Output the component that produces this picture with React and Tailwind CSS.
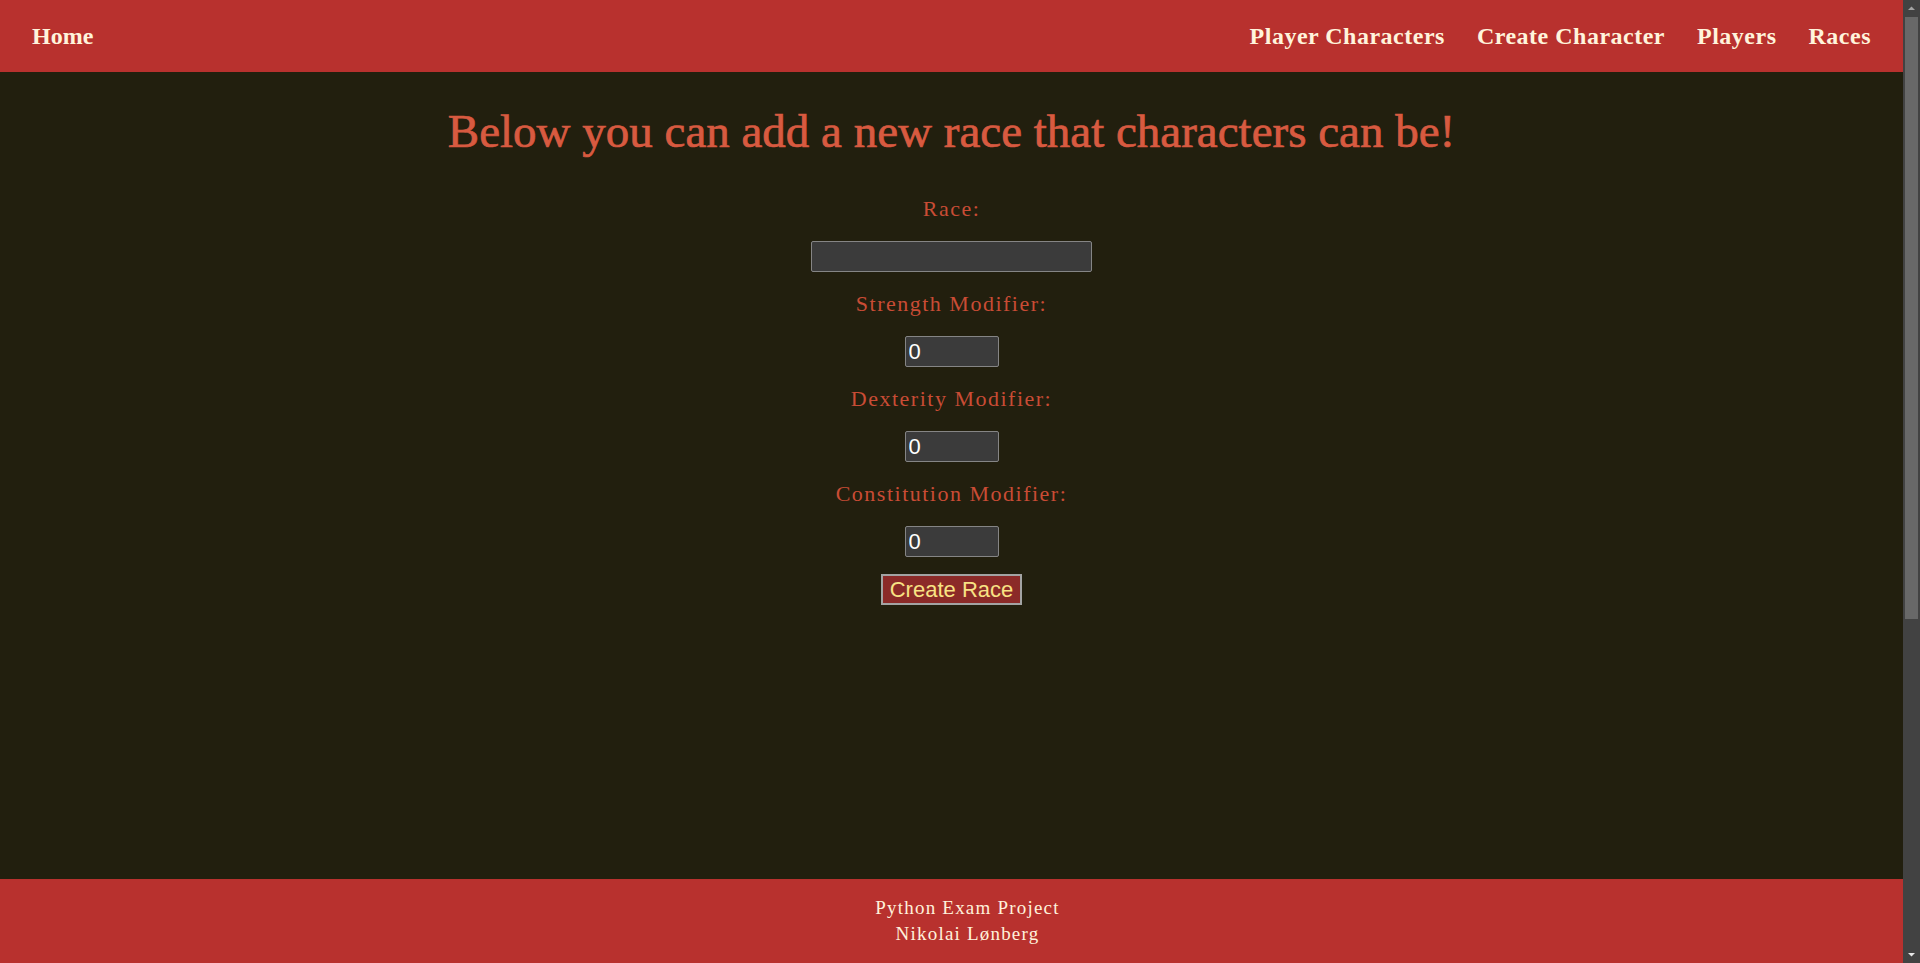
import { useState } from "react";

const navLinks = ["Player Characters", "Create Character", "Players", "Races"];

const modifiers = [
    { id: "strength", label: "Strength Modifier:" },
    { id: "dexterity", label: "Dexterity Modifier:" },
    { id: "constitution", label: "Constitution Modifier:" },
];

const serif = "font-['Liberation_Serif',Times,serif]";

// dark window scrollbar, as the browser draws it in the reference
const Scrollbar = () => (
    <div className="flex w-[17px] shrink-0 flex-col bg-[#424242]">
        <svg width="17" height="17" viewBox="0 0 17 17">
            <path d="M5 10 L8.5 6.5 L12 10 Z" fill="#a3a3a3" />
        </svg>
        <div className="mx-[2px] h-[602px] bg-[#686868]" />
        <div className="flex-1" />
        <svg width="17" height="17" viewBox="0 0 17 17">
            <path d="M5 7 L8.5 10.5 L12 7 Z" fill="#e6e6e6" />
        </svg>
    </div>
);

const App = () => {
    const [race, setRace] = useState("");
    const [mods, setMods] = useState({ strength: 0, dexterity: 0, constitution: 0 });

    return (
        <div className={`flex h-screen bg-[#221f0e] ${serif}`}>
            <div className="flex-1 overflow-y-auto [color-scheme:dark] [scrollbar-width:none]">
                <div className="flex min-h-[1486px] flex-col">
                    <nav className="flex items-center justify-between bg-[#b8312e] px-[32px] py-5 text-[24px] leading-8 font-bold text-[#fff4dc]">
                        <a href="#">Home</a>
                        <div className="flex gap-[32px]">
                            {navLinks.map((l) => (
                                <a key={l} href="#" className="tracking-[0.5px]">
                                    {l}
                                </a>
                            ))}
                        </div>
                    </nav>

                    <main className="flex flex-1 flex-col items-center">
                        <h1 className="mt-[31px] mb-[35px] text-[47px] leading-[56px] text-[#d85a40] [-webkit-text-stroke:0.7px_#d85a40]">
                            Below you can add a new race that characters can be!
                        </h1>

                        <form className="flex flex-col items-center gap-[17px]" onSubmit={(e) => e.preventDefault()}>
                            <label htmlFor="race" className="text-[22px] leading-[30px] tracking-[1.5px] text-[#c94c35]">
                                Race:
                            </label>
                            <input
                                id="race"
                                type="text"
                                value={race}
                                onChange={(e) => setRace(e.target.value)}
                                className="h-[31px] w-[281px] rounded-[2px] border border-[#858585] bg-[#3b3b3b] px-[3px] font-['Liberation_Sans',Arial,sans-serif] text-[22px] text-white outline-none"
                            />
                            {modifiers.map((m) => (
                                <div key={m.id} className="contents">
                                    <label htmlFor={m.id} className="text-[22px] leading-[30px] tracking-[1.5px] text-[#c94c35]">
                                        {m.label}
                                    </label>
                                    <input
                                        id={m.id}
                                        type="number"
                                        value={mods[m.id]}
                                        onChange={(e) => setMods({ ...mods, [m.id]: e.target.value })}
                                        className="h-[31px] w-[94px] rounded-[2px] border border-[#858585] bg-[#3b3b3b] px-[3px] font-['Liberation_Sans',Arial,sans-serif] text-[22px] tracking-normal text-white outline-none"
                                    />
                                </div>
                            ))}
                            <button
                                type="submit"
                                className="h-[31px] w-[141px] border-2 border-[#a3a3a3] bg-[#8b2a28] font-['Liberation_Sans',Arial,sans-serif] text-[22px] leading-none tracking-normal text-[#f8e284]"
                            >
                                Create Race
                            </button>
                        </form>
                    </main>

                    <footer className="sticky bottom-0 bg-[#b8312e] py-4 pl-[32px] text-center text-[19px] leading-[26px] tracking-[1.2px] text-[#fff1dc]">
                        <p>Python Exam Project</p>
                        <p>Nikolai Lønberg</p>
                    </footer>
                </div>
            </div>
            <Scrollbar />
        </div>
    );
};

export default App;
